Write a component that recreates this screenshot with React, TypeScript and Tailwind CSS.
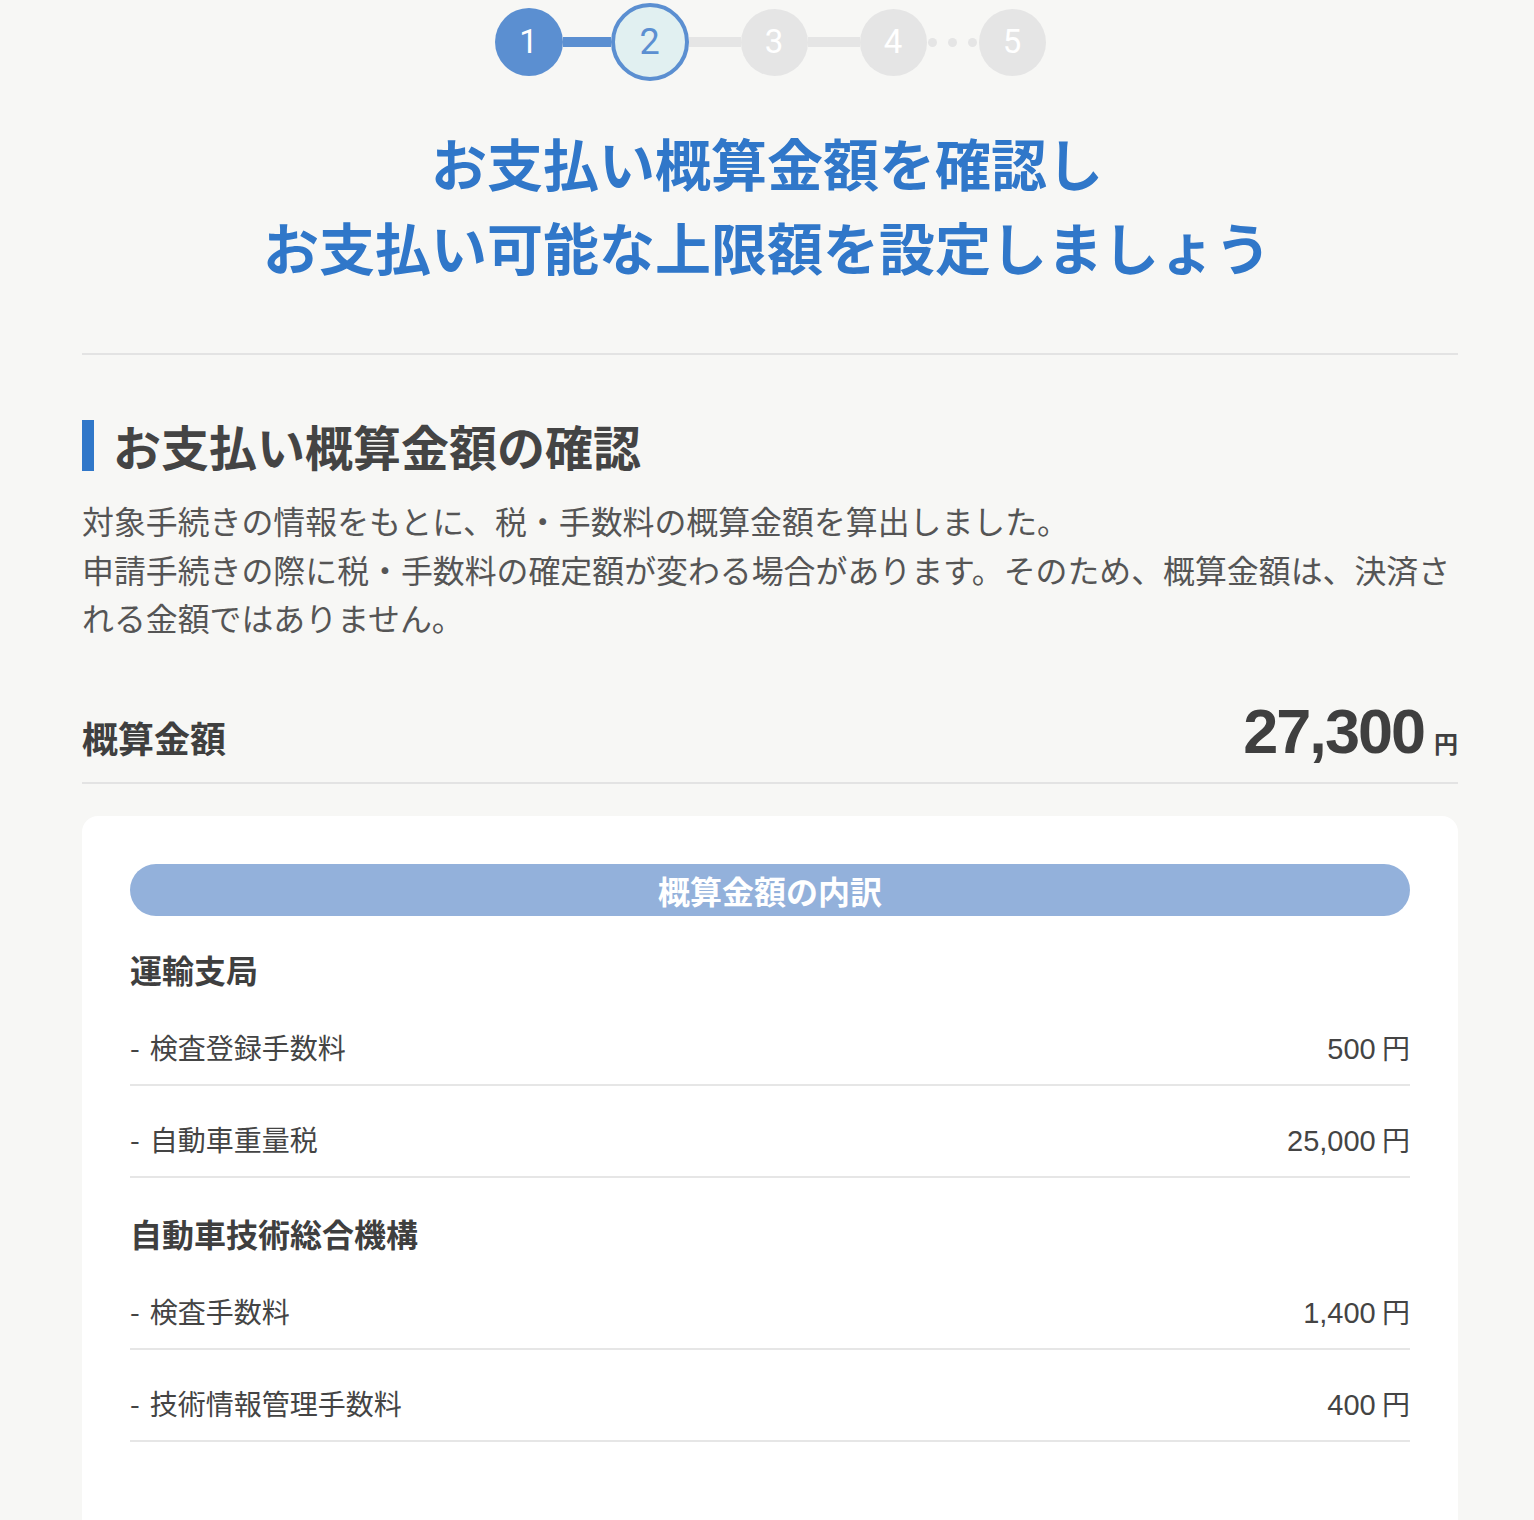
import React from "react";

const JP = "font-['Noto_Sans_CJK_JP','Noto_Sans',sans-serif]";

function Stepper() {
  return (
    <div className="flex h-[84px] items-center justify-center pl-[6px]">
      <div className="flex h-[68px] w-[68px] items-center justify-center rounded-full bg-[#5b8fd1] font-['Roboto',sans-serif] text-[33px] text-white">1</div>
      <div className="h-[10px] w-[48px] bg-[#5b8fd1]" />
      <div className="flex h-[78px] w-[78px] items-center justify-center rounded-full border-[4px] border-[#5b8fd1] bg-[#e1f0f1] font-['Roboto',sans-serif] text-[36px] text-[#5b8fd1]">2</div>
      <div className="h-[10px] w-[52px] bg-[#e5e5e5]" />
      <div className="flex h-[67px] w-[67px] items-center justify-center rounded-full bg-[#e5e5e5] font-['Roboto',sans-serif] text-[33px] text-white">3</div>
      <div className="h-[10px] w-[52px] bg-[#e5e5e5]" />
      <div className="flex h-[67px] w-[67px] items-center justify-center rounded-full bg-[#e5e5e5] font-['Roboto',sans-serif] text-[33px] text-white">4</div>
      <div className="flex w-[52px] items-center justify-center gap-[11px]">
        <div className="h-[9px] w-[9px] rounded-full bg-[#e5e5e5]" />
        <div className="h-[9px] w-[9px] rounded-full bg-[#e5e5e5]" />
        <div className="h-[9px] w-[9px] rounded-full bg-[#e5e5e5]" />
      </div>
      <div className="flex h-[67px] w-[67px] items-center justify-center rounded-full bg-[#e5e5e5] font-['Roboto',sans-serif] text-[33px] text-white">5</div>
    </div>
  );
}

function Row({ label, amount }: { label: string; amount: string }) {
  return (
    <div className="flex h-[92px] items-start justify-between border-b-2 border-[#e6e6e6] pt-[33px] text-[28px] leading-[40px] text-[#444]">
      <span className="leading-[40px]">
        -<span className="ml-[10px]">{label}</span>
      </span>
      <span className="leading-[40px]">
        <span className="font-['Liberation_Sans',sans-serif] text-[29px] leading-[40px]">{amount}</span> 円
      </span>
    </div>
  );
}

export default function App() {
  return (
    <div className={`min-h-[1520px] bg-[#f7f7f5] ${JP}`}>
      <Stepper />
      <h1 className="mt-[36px] text-center text-[56px] font-bold leading-[84px] text-[#3077c9]">
        お支払い概算金額を確認し
        <br />
        お支払い可能な上限額を設定しましょう
      </h1>
      <div className="ml-[82px] w-[1376px]">
        <div className="mt-[65px] h-[2px] bg-[#e3e3e3]" />
        <div className="mt-[62px] flex items-center gap-[19px]">
          <div className="h-[51px] w-[12px] bg-[#3077c9]" />
          <h2 className="text-[48px] font-bold leading-[56px] text-[#444]">お支払い概算金額の確認</h2>
        </div>
        <p className="mt-[23px] text-[31.9px] leading-[48.5px] text-[#555]">
          対象手続きの情報をもとに、税・手数料の概算金額を算出しました。
          <br />
          申請手続きの際に税・手数料の確定額が変わる場合があります。そのため、概算金額は、決済される金額ではありません。
        </p>
        <div className="mt-[58px] flex items-baseline justify-between border-b-2 border-[#e3e3e3] pb-[18px] text-[#3f3f3f]">
          <span className="text-[36px] font-bold">概算金額</span>
          <span className="flex items-baseline">
            <span className="font-['Liberation_Sans',sans-serif] text-[63px] font-bold leading-[1] tracking-[-2px]">27,300</span>
            <span className="ml-[10px] text-[24px] font-bold">円</span>
          </span>
        </div>
        <div className="mt-[32px] rounded-t-[16px] bg-white px-[48px] pt-[48px] pb-[120px]">
          <div className="flex h-[52px] items-center justify-center rounded-full bg-[#93b1db] text-[32px] font-bold text-white">
            概算金額の内訳
          </div>
          <h3 className="mt-[31px] mb-[3px] text-[32px] font-bold leading-[44px] text-[#3f3f3f]">運輸支局</h3>
          <Row label="検査登録手数料" amount="500" />
          <Row label="自動車重量税" amount="25,000" />
          <h3 className="mt-[33px] mb-[3px] text-[32px] font-bold leading-[44px] text-[#3f3f3f]">自動車技術総合機構</h3>
          <Row label="検査手数料" amount="1,400" />
          <Row label="技術情報管理手数料" amount="400" />
        </div>
      </div>
    </div>
  );
}
